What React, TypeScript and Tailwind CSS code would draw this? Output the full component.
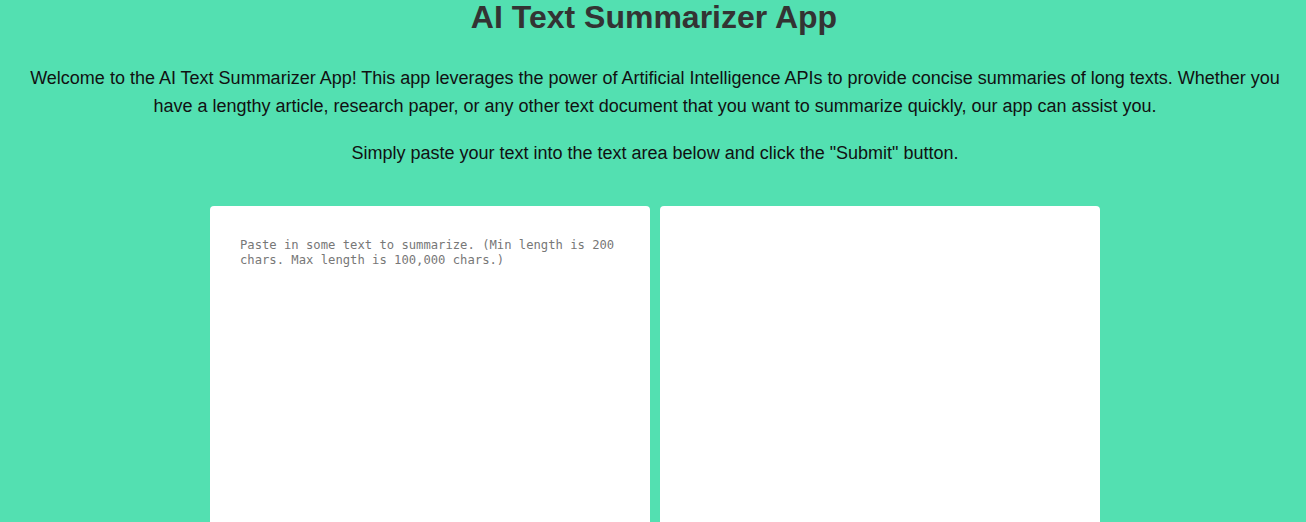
export default function App() {
  return (
    <div className="min-h-screen bg-[#53e0b1] font-['Liberation_Sans',Arial,sans-serif] text-center">
      <h1 className="pl-[2px] text-[32px] leading-[34px] font-bold text-[#333333]">AI Text Summarizer App</h1>
      <div className="pl-[22px] pr-[18px] text-[18px] leading-[28px] text-[#111]">
        <p className="mt-[30px]">
          Welcome to the AI Text Summarizer App! This app leverages the power of Artificial Intelligence APIs to provide
          concise summaries of long texts. Whether you have a lengthy article, research paper, or any other text document
          that you want to summarize quickly, our app can assist you.
        </p>
        <p className="mt-[19px]">Simply paste your text into the text area below and click the "Submit" button.</p>
      </div>
      <div className="mt-[39px] flex justify-center gap-[10px] pl-[4px]">
        <textarea
          className="h-[400px] w-[440px] resize-none rounded-[4px] bg-white px-[30px] pt-[32px] pb-[30px] font-['DejaVu_Sans_Mono',monospace] text-[12.2px] leading-[15px] text-[#333] outline-none placeholder:text-[#777]"
          placeholder="Paste in some text to summarize. (Min length is 200 chars. Max length is 100,000 chars.)"
        />
        <textarea
          className="h-[400px] w-[440px] resize-none rounded-[4px] bg-white px-[30px] pt-[32px] pb-[30px] font-['DejaVu_Sans_Mono',monospace] text-[12.2px] leading-[15px] text-[#333] outline-none"
          readOnly
        />
      </div>
    </div>
  );
}
